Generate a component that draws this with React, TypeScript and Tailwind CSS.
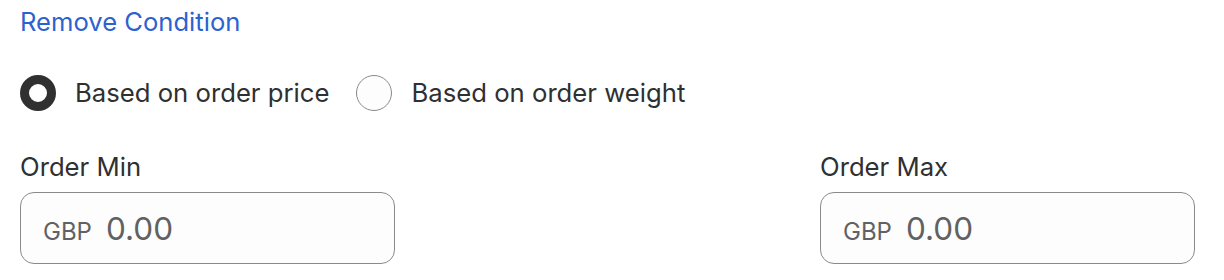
import { useState } from 'react';

function Radio({ checked, label, onClick }: { checked: boolean; label: string; onClick: () => void }) {
  return (
    <label className="flex items-center gap-[19px] cursor-pointer" onClick={onClick}>
      <span
        className={`w-[36px] h-[36px] rounded-full shrink-0 ${
          checked ? 'border-[9px] border-[#303030] bg-white' : 'border border-[#8a8a8a] bg-[#fdfdfd]'
        }`}
      />
      <span className="text-[25.7px] text-[#303030] leading-none">{label}</span>
    </label>
  );
}

function MoneyField({ label }: { label: string }) {
  return (
    <div className="w-[375px]">
      <div className="text-[25.7px] text-[#303030] leading-none mb-[13px]">{label}</div>
      <div className="h-[72px] rounded-[14px] border border-[#8a8a8a] bg-[#fdfdfd] flex items-center px-[22px]">
        <div className="flex items-baseline gap-[14px] w-full">
          <span className="text-[24px] text-[#616161] leading-none">GBP</span>
          <input
            className="text-[31.5px] text-[#616161] leading-none bg-transparent outline-none w-full placeholder-[#616161]"
            placeholder="0.00"
          />
        </div>
      </div>
    </div>
  );
}

export default function App() {
  const [basis, setBasis] = useState<'price' | 'weight'>('price');

  return (
    <div className="px-[20px] pt-[9px] bg-white h-[280px]" style={{ fontFamily: 'Inter, "Noto Sans", sans-serif' }}>
      <button className="block text-[25.6px] text-[#2c62cf] leading-none">Remove Condition</button>

      <div className="flex items-center gap-[27px] mt-[40px]">
        <Radio checked={basis === 'price'} label="Based on order price" onClick={() => setBasis('price')} />
        <Radio checked={basis === 'weight'} label="Based on order weight" onClick={() => setBasis('weight')} />
      </div>

      <div className="flex justify-between pr-[9px] mt-[43px]">
        <MoneyField label="Order Min" />
        <MoneyField label="Order Max" />
      </div>
    </div>
  );
}
